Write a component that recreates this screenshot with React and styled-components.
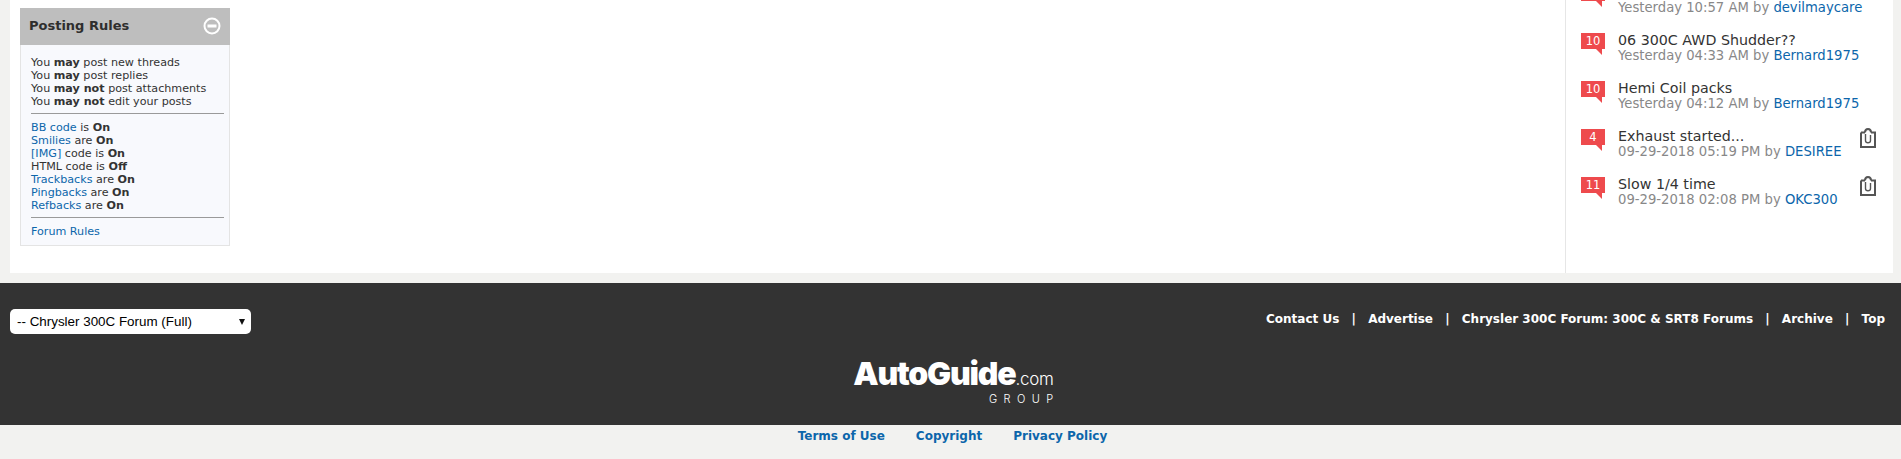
import React from "react";
import styled, { createGlobalStyle } from "styled-components";

const Global = createGlobalStyle`
  html, body { margin: 0; padding: 0; height: 459px; overflow: hidden; background: #f2f2f0; }
  body { font-family: "DejaVu Sans", Verdana, sans-serif; color: #333; }
  a { color: #0c66ab; text-decoration: none; }
`;

const Page = styled.div`
  display: flex;
  flex-direction: column;
  height: 459px;
  overflow: hidden;
`;
const Main = styled.main`
  display: flex;
  justify-content: space-between;
  height: 273px;
  margin: 0 8px 10px 10px;
  background: #fff;
`;
const RulesColumn = styled.div`
  padding: 8px 0 0 10px;
`;
const RulesBox = styled.section`
  width: 210px;
  height: 238px;
  box-sizing: border-box;
  background: #f8f9fd;
  border: 1px solid #e4e4e4;
  border-top: 0;
`;
const RulesHead = styled.header`
  display: flex;
  align-items: center;
  justify-content: space-between;
  height: 37px;
  margin: 0 -1px;
  padding: 0 9px 2px;
  box-sizing: border-box;
  background: #bebebe;
  font-size: 13px;
  font-weight: 700;
  color: #2e2e2e;
`;
const RulesBody = styled.div`
  padding: 11px 5px 0 10px;
  font-size: 11.15px;
  line-height: 13px;
`;
const RuleLine = styled.div``;
const Divider = styled.hr`
  height: 0;
  margin: 5px 0 7px;
  border: 0;
  border-top: 1px solid #9a9a9a;
`;
const Sidebar = styled.aside`
  width: 328px;
  box-sizing: border-box;
  border-left: 1px solid #e6e6e6;
  padding: 0 0 0 15px;
  overflow: hidden;
`;
const ThreadList = styled.ul`
  list-style: none;
  margin: -16px 0 0;
  padding: 0;
`;
const Thread = styled.li`
  display: flex;
  height: 48px;
`;
const Badge = styled.div`
  position: relative;
  flex: none;
  width: 24px;
  height: 16px;
  margin-top: 1px;
  background: #ee4a4d;
  color: #fff;
  font-size: 11.5px;
  line-height: 16px;
  text-align: center;
  &::after {
    content: "";
    position: absolute;
    right: 3px;
    top: 16px;
    border-top: 6px solid #ee4a4d;
    border-left: 6px solid transparent;
  }
`;
const ThreadText = styled.div`
  flex: 1;
  margin-left: 13px;
`;
const ThreadTitle = styled.div`
  font-size: 14.25px;
  line-height: 16px;
  color: #333;
`;
const ThreadMeta = styled.div`
  font-size: 13.2px;
  line-height: 16px;
  color: #888;
`;
const Clip = styled.svg`
  flex: none;
  width: 16px;
  height: 20px;
  margin: 0 17px 0 0;
`;
const Footer = styled.footer`
  height: 142px;
  flex: none;
  background: #333;
`;
const FooterTop = styled.div`
  display: flex;
  justify-content: space-between;
  align-items: flex-start;
  padding: 0 16px 0 10px;
`;
const SelectWrap = styled.div`
  position: relative;
  margin-top: 26px;
  &::after {
    content: "";
    position: absolute;
    right: 6px;
    top: 10px;
    border-top: 6px solid #111;
    border-left: 3px solid transparent;
    border-right: 3px solid transparent;
  }
`;
const ForumSelect = styled.select`
  appearance: none;
  display: block;
  width: 241px;
  height: 25px;
  padding: 0 0 0 7px;
  border: 0;
  border-radius: 5px;
  background: #fff;
  color: #000;
  font-family: "Liberation Sans", Arial, sans-serif;
  font-size: 13.4px;
`;
const FooterNav = styled.nav`
  display: flex;
  align-items: center;
  margin-top: 28px;
  font-size: 12px;
  line-height: 17px;
  font-weight: 700;
  color: #fff;
`;
const FooterLink = styled.a`
  color: #fff;
`;
const Sep = styled.span`
  margin: 0 12.2px;
  font-weight: 700;
`;
const Logo = styled.div`
  display: flex;
  flex-direction: column;
  align-items: flex-end;
  width: 206px;
  margin: 26px auto 0;
  color: #fff;
`;
const LogoMain = styled.div`
  font-family: Inter, "Liberation Sans", sans-serif;
  font-size: 32px;
  line-height: 28px;
  font-weight: 900;
  letter-spacing: -1.2px;
`;
const LogoCom = styled.span`
  font-size: 17px;
  font-weight: 300;
  letter-spacing: -0.3px;
`;
const LogoGroup = styled.div`
  font-family: Inter, "Liberation Sans", sans-serif;
  font-size: 11px;
  line-height: 12px;
  letter-spacing: 6.4px;
  margin-right: -6px;
  font-weight: 300;
`;
const BottomBar = styled.div`
  display: flex;
  justify-content: center;
  gap: 31px;
  padding: 2px 0 0 4px;
  font-size: 12px;
  line-height: 18px;
  font-weight: 700;
`;

const rules = [
  ["may", "post new threads"],
  ["may", "post replies"],
  ["may not", "post attachments"],
  ["may not", "edit your posts"],
];
const codes = [
  ["BB code", "is", "On"],
  ["Smilies", "are", "On"],
  ["[IMG]", "code is", "On"],
  [null, "HTML code is", "Off"],
  ["Trackbacks", "are", "On"],
  ["Pingbacks", "are", "On"],
  ["Refbacks", "are", "On"],
];
const threads = [
  { n: "", title: "", date: "Yesterday 10:57 AM", by: "devilmaycare" },
  { n: "10", title: "06 300C AWD Shudder??", date: "Yesterday 04:33 AM", by: "Bernard1975" },
  { n: "10", title: "Hemi Coil packs", date: "Yesterday 04:12 AM", by: "Bernard1975" },
  { n: "4", title: "Exhaust started...", date: "09-29-2018 05:19 PM", by: "DESIREE", clip: true },
  { n: "11", title: "Slow 1/4 time", date: "09-29-2018 02:08 PM", by: "OKC300", clip: true },
];
const links = ["Contact Us", "Advertise", "Chrysler 300C Forum: 300C & SRT8 Forums", "Archive", "Top"];

const CollapseIcon = () => (
  <svg width="18" height="18" viewBox="0 0 18 18">
    <circle cx="9" cy="9" r="7.5" fill="none" stroke="#fff" strokeWidth="2" />
    <rect x="4.5" y="7.5" width="9" height="3" fill="#fff" />
  </svg>
);
const ClipIcon = () => (
  <Clip viewBox="0 0 16 20">
    <path d="M1 4.5h4M11 4.5h4V19H1V4.5" fill="none" stroke="#555" strokeWidth="2" />
    <path d="M5 4.5C5 2 6 1 8 1s3 1 3 3.5" fill="none" stroke="#555" strokeWidth="2" />
    <path d="M5.5 6v6.5c0 3 5 3 5 0V7" fill="none" stroke="#555" strokeWidth="1.4" />
  </Clip>
);

export default function App() {
  return (
    <Page>
      <Global />
      <Main>
        <RulesColumn>
          <RulesBox>
            <RulesHead>
              Posting Rules
              <CollapseIcon />
            </RulesHead>
            <RulesBody>
              {rules.map(([a, b]) => (
                <RuleLine key={b}>You <b>{a}</b> {b}</RuleLine>
              ))}
              <Divider />
              {codes.map(([l, t, s]) => (
                <RuleLine key={t + s + l}>
                  {l && <a href="#">{l}</a>} {t} <b>{s}</b>
                </RuleLine>
              ))}
              <Divider />
              <RuleLine><a href="#">Forum Rules</a></RuleLine>
            </RulesBody>
          </RulesBox>
        </RulesColumn>
        <Sidebar>
          <ThreadList>
            {threads.map((t) => (
              <Thread key={t.date}>
                <Badge>{t.n}</Badge>
                <ThreadText>
                  <ThreadTitle>{t.title || "\u00a0"}</ThreadTitle>
                  <ThreadMeta>{t.date} by <a href="#">{t.by}</a></ThreadMeta>
                </ThreadText>
                {t.clip && <ClipIcon />}
              </Thread>
            ))}
          </ThreadList>
        </Sidebar>
      </Main>
      <Footer>
        <FooterTop>
          <SelectWrap>
            <ForumSelect defaultValue="full">
              <option value="full">-- Chrysler 300C Forum (Full)</option>
            </ForumSelect>
          </SelectWrap>
          <FooterNav>
            {links.map((l, i) => (
              <React.Fragment key={l}>
                {i > 0 && <Sep>|</Sep>}
                <FooterLink href="#">{l}</FooterLink>
              </React.Fragment>
            ))}
          </FooterNav>
        </FooterTop>
        <Logo>
          <LogoMain>AutoGuide<LogoCom>.com</LogoCom></LogoMain>
          <LogoGroup>GROUP</LogoGroup>
        </Logo>
      </Footer>
      <BottomBar>
        <a href="#">Terms of Use</a>
        <a href="#">Copyright</a>
        <a href="#">Privacy Policy</a>
      </BottomBar>
    </Page>
  );
}
